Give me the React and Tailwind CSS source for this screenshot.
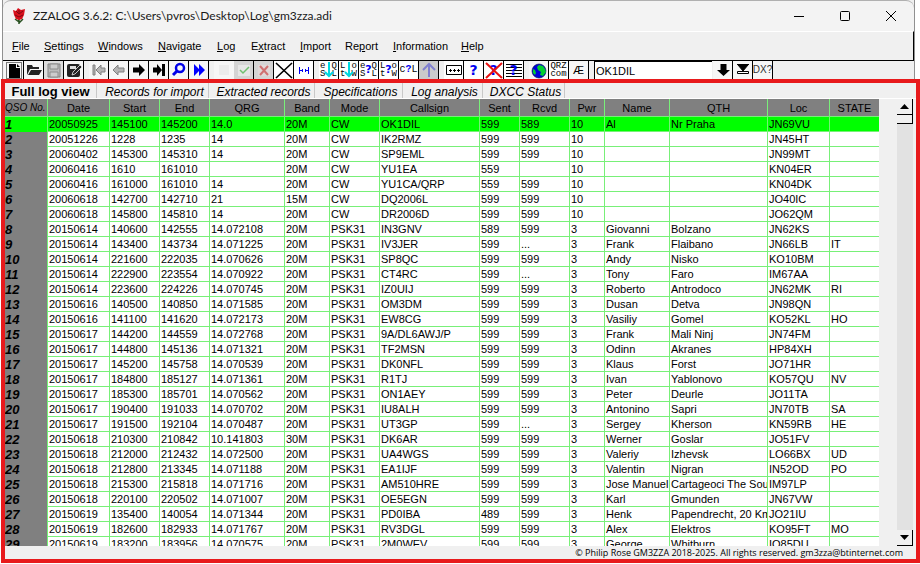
import React from "react";

const COLUMNS = [
  ["QSO No.", 42],
  ["Date", 62],
  ["Start", 50],
  ["End", 50],
  ["QRG", 75],
  ["Band", 45],
  ["Mode", 50],
  ["Callsign", 100],
  ["Sent", 40],
  ["Rcvd", 50],
  ["Pwr", 35],
  ["Name", 65],
  ["QTH", 98],
  ["Loc", 62],
  ["STATE", 50],
];

const LOG = `20050925|145100|145200|14.0|20M|CW|OK1DIL|599|589|10|Al|Nr Praha|JN69VU|
20051226|1228|1235|14|20M|CW|IK2RMZ|599|599|10|||JN45HT|
20060402|145300|145310|14|20M|CW|SP9EML|599|599|10|||JN99MT|
20060416|1610|161010||20M|CW|YU1EA|559||10|||KN04ER|
20060416|161000|161010|14|20M|CW|YU1CA/QRP|559|599|10|||KN04DK|
20060618|142700|142710|21|15M|CW|DQ2006L|599|599|10|||JO40IC|
20060618|145800|145810|14|20M|CW|DR2006D|599|599|10|||JO62QM|
20150614|140600|142555|14.072108|20M|PSK31|IN3GNV|589|599|3|Giovanni|Bolzano|JN62KS|
20150614|143400|143734|14.071225|20M|PSK31|IV3JER|599|...|3|Frank|Flaibano|JN66LB|IT
20150614|221600|222035|14.070626|20M|PSK31|SP8QC|599|599|3|Andy|Nisko|KO10BM|
20150614|222900|223554|14.070922|20M|PSK31|CT4RC|599|...|3|Tony|Faro|IM67AA|
20150614|223600|224226|14.070745|20M|PSK31|IZ0UIJ|599|599|3|Roberto|Antrodoco|JN62MK|RI
20150616|140500|140850|14.071585|20M|PSK31|OM3DM|599|599|3|Dusan|Detva|JN98QN|
20150616|141100|141620|14.072173|20M|PSK31|EW8CG|599|599|3|Vasiliy|Gomel|KO52KL|HO
20150617|144200|144559|14.072768|20M|PSK31|9A/DL6AWJ/P|599|599|3|Frank|Mali Ninj|JN74FM|
20150617|144800|145136|14.071321|20M|PSK31|TF2MSN|599|599|3|Odinn|Akranes|HP84XH|
20150617|145200|145758|14.070539|20M|PSK31|DK0NFL|599|599|3|Klaus|Forst|JO71HR|
20150617|184800|185127|14.071361|20M|PSK31|R1TJ|599|599|3|Ivan|Yablonovo|KO57QU|NV
20150617|185300|185701|14.070562|20M|PSK31|ON1AEY|599|599|3|Peter|Deurle|JO11TA|
20150617|190400|191033|14.070702|20M|PSK31|IU8ALH|599|599|3|Antonino|Sapri|JN70TB|SA
20150617|191500|192104|14.070487|20M|PSK31|UT3GP|599|...|3|Sergey|Kherson|KN59RB|HE
20150618|210300|210842|10.141803|30M|PSK31|DK6AR|599|599|3|Werner|Goslar|JO51FV|
20150618|212000|212432|14.072500|20M|PSK31|UA4WGS|599|599|3|Valeriy|Izhevsk|LO66BX|UD
20150618|212800|213345|14.071188|20M|PSK31|EA1IJF|599|599|3|Valentin|Nigran|IN52OD|PO
20150618|215300|215818|14.071716|20M|PSK31|AM510HRE|599|599|3|Jose Manuel|Cartageoci The South|IM97LP|
20150618|220100|220502|14.071007|20M|PSK31|OE5EGN|599|599|3|Karl|Gmunden|JN67VW|
20150619|135400|140054|14.071344|20M|PSK31|PD0IBA|489|599|3|Henk|Papendrecht, 20 Km|JO21IU|
20150619|182600|182933|14.071767|20M|PSK31|RV3DGL|599|599|3|Alex|Elektros|KO95FT|MO
20150619|183200|183956|14.070575|20M|PSK31|2M0WEV|599|599|3|George|Whitburn|IO85DU|`
  .split("\n")
  .map((line) => line.split("|"));

const MENUS = [
  ["", "F", "ile", "w-8"],
  ["", "S", "ettings", "w-[54px]"],
  ["", "W", "indows", "w-[60px]"],
  ["", "N", "avigate", "w-[59px]"],
  ["", "L", "og", "w-[34px]"],
  ["E", "x", "tract", "w-[49px]"],
  ["", "I", "mport", "w-[45px]"],
  ["Re", "p", "ort", "w-12"],
  ["", "I", "nformation", "w-[68px]"],
  ["", "H", "elp", "w-8"],
];

const TABS = [
  ["Records for import", "w-[112px]"],
  ["Extracted records", "w-[106px]"],
  ["Specifications", "w-[88px]"],
  ["Log analysis", "w-20"],
  ["DXCC Status", "w-[82px]"],
];

function Tool({ label, tone = "bg-[#f6f6f6]", children }) {
  return (
    <button
      type="button"
      aria-label={label}
      className={`relative flex h-[18px] w-5 shrink-0 items-center justify-center overflow-hidden border-r border-black ${tone}`}
    >
      {children}
    </button>
  );
}

function Icon({ children }) {
  return (
    <svg viewBox="0 0 18 18" className="size-[18px] shrink-0" aria-hidden="true">
      {children}
    </svg>
  );
}

function Lettered({ letters }) {
  return (
    <span className="grid grid-cols-2 gap-x-1.5 text-center font-['Liberation_Mono',monospace] text-[9px] leading-[8px] text-black">
      {letters.split("").map((letter) => (
        <span key={letter}>{letter}</span>
      ))}
    </span>
  );
}

function Query({ size = "text-sm" }) {
  return (
    <span className={`font-['DejaVu_Sans',sans-serif] leading-4 font-bold text-[#0000f0] ${size}`}>?</span>
  );
}

function Over({ children }) {
  return <span className="absolute inset-0 flex items-center justify-center">{children}</span>;
}

const CyanArrow = () => (
  <Icon>
    <path d="M9 1v14M5 11l4 4 4-4" fill="none" stroke="#00d8e0" strokeWidth="2" />
  </Icon>
);

function Toolbar() {
  return (
    <div className="flex h-[18px] gap-[5px] overflow-hidden pl-px">
      <div className="flex">
        <Tool label="New">
          <Icon>
            <rect x="1.5" y="1.5" width="15" height="16" fill="none" stroke="#000" strokeDasharray="1 1" />
            <path d="M4 3h7v4h4v10H4zM12 3l3 3h-3z" fill="#000" />
          </Icon>
        </Tool>
        <Tool label="Open">
          <Icon>
            <path d="M2 14V4h5l1 2h6v2H5zM3 14l3-5h11l-3 5z" fill="#222" />
          </Icon>
        </Tool>
        <Tool label="Save" tone="bg-[#dcdcdc]">
          <Icon>
            <path d="M3 3h12v13H3z" fill="#bbb" stroke="#808080" />
            <path d="M5 3h8v5H5zM5 11h8v5H5z" fill="#ccc" stroke="#8c8c8c" />
          </Icon>
        </Tool>
        <Tool label="Edit">
          <Icon>
            <rect x="2" y="3" width="13" height="13" rx="2" fill="#222" />
            <path d="M5 5h6v3H5z" fill="#ddd" />
            <path d="M7 14l1-3 7-7 2 2-7 7z" fill="#222" stroke="#eee" strokeWidth=".8" />
          </Icon>
        </Tool>
      </div>
      <div className="flex">
        <Tool label="First record">
          <Icon>
            <path d="M3 4h2v10H3zM6 9l5-5v3h4v4h-4v3z" fill="#b4b4b4" stroke="#808080" />
          </Icon>
        </Tool>
        <Tool label="Previous record">
          <Icon>
            <path d="M3 9l5-5v3h6v4H8v3z" fill="#b4b4b4" stroke="#808080" />
          </Icon>
        </Tool>
        <Tool label="Next record">
          <Icon>
            <path d="M15 9l-6-6v3.500H3v5h6V15z" fill="#000" />
          </Icon>
        </Tool>
        <Tool label="Last record">
          <Icon>
            <path d="M12 9L7 3v3.500H3v5h4V15zM12 3h3v12h-3z" fill="#000" />
          </Icon>
        </Tool>
        <Tool label="Find">
          <Icon>
            <circle cx="10" cy="7" r="4" fill="none" stroke="#0000e8" strokeWidth="2.500" />
            <path d="M7 10l-4 4" stroke="#0000e8" strokeWidth="3" />
          </Icon>
        </Tool>
        <Tool label="Find next">
          <Icon>
            <path d="M4 3l5 5V3l6 6-6 6v-5l-5 5z" fill="#0000ff" />
          </Icon>
        </Tool>
      </div>
      <div className="flex">
        <button type="button" aria-label="Mark" className="flex h-[18px] w-5 items-center justify-center bg-[#f6f6f6]">
          <span className="size-2.5 bg-[#ececec]" />
        </button>
        <Tool label="Accept" tone="bg-[#d4d4d4]">
          <Icon>
            <path d="M3 4h12v11H3z" fill="#e6e6e6" />
            <path d="M5 9l3 3 6-6" fill="none" stroke="#70c070" strokeWidth="1.500" />
          </Icon>
        </Tool>
        <Tool label="Reject" tone="bg-[#d4d4d4]">
          <Icon>
            <path d="M3 4h12v11H3z" fill="#e0d8d8" />
            <path d="M5 5l8 9M13 5l-8 9" stroke="#d07070" strokeWidth="2" />
          </Icon>
        </Tool>
        <Tool label="Cancel" tone="bg-white">
          <Icon>
            <path d="M1 2l16 15M17 2L1 17" stroke="#000" strokeWidth="1.600" />
          </Icon>
        </Tool>
        <Tool label="Signal" tone="bg-white">
          <Icon>
            <path d="M4.500 6v7M7.500 8v3M10.500 8v3M13.500 6v7M5 9.500h2M11 9.500h2" stroke="#0000f0" />
          </Icon>
        </Tool>
      </div>
      <div className="flex">
        <Tool label="Download eQSL" tone="bg-white">
          <Lettered letters="eQSL" />
          <Over><CyanArrow /></Over>
        </Tool>
        <Tool label="Download LotW" tone="bg-white">
          <Lettered letters="LotW" />
          <Over><CyanArrow /></Over>
        </Tool>
        <Tool label="Query eQSL" tone="bg-white">
          <Lettered letters="eQSL" />
          <Over><Query size="text-[11px]" /></Over>
        </Tool>
        <Tool label="Query LotW" tone="bg-white">
          <Lettered letters="LotW" />
          <Over><Query size="text-[11px]" /></Over>
        </Tool>
        <Tool label="Query Club Log" tone="bg-white">
          <span className="font-['Liberation_Mono',monospace] text-[10px] leading-4">
            c<b className="text-[#0000f0]">?</b>L
          </span>
        </Tool>
        <Tool label="Upload" tone="bg-[#cbcbcb]">
          <Icon>
            <path d="M9 16V4M3 9l6-6 6 6" fill="none" stroke="#8080d0" strokeWidth="2" />
          </Icon>
        </Tool>
      </div>
      <div className="flex">
        <Tool label="Rename" tone="bg-white">
          <Icon>
            <path d="M1.500 4.500h15v9h-15z" fill="#fff" stroke="#000" />
            <path d="M4 9.500h3M8 9.500h3M12 9.500h3M5.500 8v3M9.500 8v3M13.500 8v3" stroke="#000" />
          </Icon>
        </Tool>
        <Tool label="Query" tone="bg-white"><Query /></Tool>
        <Tool label="Clear query" tone="bg-white">
          <Query />
          <Over>
            <Icon>
              <path d="M1 2l16 15M17 2L1 17" stroke="#e81010" strokeWidth="2" />
            </Icon>
          </Over>
        </Tool>
        <Tool label="Query list" tone="bg-white">
          <Over>
            <Icon>
              <path d="M1 3.500h16M1 6.500h16M1 9.500h16M1 12.500h16M1 15.500h16" stroke="#000" />
            </Icon>
          </Over>
          <Over><Query /></Over>
        </Tool>
      </div>
      <div className="flex">
        <Tool label="World">
          <Icon>
            <circle cx="9" cy="10" r="7" fill="#0000d8" stroke="#001040" strokeWidth=".6" />
            <path d="M9 4l4 1 2 3 1 3-3 4-3-1 1-3-3-2-1-3zM3 8l2 1 1 3-1 2-2-2z" fill="#00d030" />
          </Icon>
        </Tool>
        <Tool label="QRZ.com" tone="bg-white">
          <span className="flex flex-col text-center font-['Liberation_Mono',monospace] text-[9px] leading-[8px]">
            <span>QRZ</span>
            <span>com</span>
          </span>
        </Tool>
        <Tool label="Special characters">
          <span className="text-[11px] leading-4">Æ</span>
        </Tool>
      </div>
      <div className="flex">
        <input
          aria-label="Search"
          defaultValue="OK1DIL"
          className="h-[18px] w-[118px] border-t border-l border-black bg-white pl-px text-[11px] leading-4 outline-none"
        />
        <span className="w-px" />
        <Tool label="Search down">
          <Icon>
            <path d="M6.500 3h6v6H16l-6.500 6L3 9h3.500z" fill="#000" />
          </Icon>
        </Tool>
        <Tool label="Search to end">
          <Icon>
            <path d="M3 3.500h12M4 4h10L9 10z" fill="#000" stroke="#000" />
            <path d="M3.500 10.500h11v2h-11z" fill="#fff" stroke="#000" />
          </Icon>
        </Tool>
        <Tool label="DX query">
          <span className="text-[10px] leading-4 text-[#333]">DX?</span>
        </Tool>
      </div>
    </div>
  );
}

function TitleBar() {
  return (
    <header className="flex h-[31px] items-center rounded-t-lg border-t border-[#b0b0b0] bg-[#f3f3f3]">
      <svg viewBox="0 0 16 18" className="ml-2 h-[18px] w-4" aria-hidden="true">
        <path d="M8 10v7M8 15l-4-3M8 16l4-4" stroke="#285020" strokeWidth="1.500" fill="none" />
        <path d="M2 3l3 1 2-3 3 2 4-1-1 6-2 4-3 1-3-1-2-4z" fill="#d8101c" />
        <path d="M5 4l3 3 4-3M4 8l4 2 4-2M8 3v4" stroke="#800810" fill="none" />
      </svg>
      <h1 className="ml-1.5 flex-1 font-['Lato','Noto_Sans',sans-serif] text-xs text-[#1a1a1a]">
        ZZALOG 3.6.2: C:\Users\pvros\Desktop\Log\gm3zza.adi
      </h1>
      <button type="button" aria-label="Minimize" className="flex w-[46px] justify-center">
        <svg viewBox="0 0 10 10" className="size-2.5"><path d="M0 5.500h10" stroke="#000" /></svg>
      </button>
      <button type="button" aria-label="Maximize" className="flex w-[46px] justify-center">
        <svg viewBox="0 0 10 10" className="size-2.5"><rect x=".5" y=".5" width="9" height="9" rx="1" fill="none" stroke="#000" /></svg>
      </button>
      <button type="button" aria-label="Close" className="flex w-[46px] justify-center">
        <svg viewBox="0 0 10 10" className="size-2.5"><path d="M0 0l10 10M10 0L0 10" stroke="#000" /></svg>
      </button>
    </header>
  );
}

function LogTable() {
  return (
    <table className="w-[874px] shrink-0 table-fixed border-separate border-spacing-0 text-[11px] leading-[14px] whitespace-nowrap">
      <colgroup>
        {COLUMNS.map(([name, width]) => (
          <col key={name} style={{ width }} />
        ))}
      </colgroup>
      <thead>
        <tr className="h-[18px] bg-[#808080]">
          {COLUMNS.map(([name], i) => (
            <th
              key={name}
              scope="col"
              className={`border-b border-[#78f078] p-0 font-normal ${i ? "border-l text-center" : "text-left text-[10px] italic"}`}
            >
              {name}
            </th>
          ))}
        </tr>
      </thead>
      <tbody>
        {LOG.map((cells, r) => (
          <tr key={r} className={`h-[15px] ${r === 0 ? "bg-[#00ff00]" : "bg-white"}`}>
            <th
              scope="row"
              className={`p-0 text-left text-[13px] leading-[14px] font-bold italic ${r === 0 ? "" : "bg-[#808080]"}`}
            >
              {r + 1}
            </th>
            {cells.map((text, c) => (
              <td key={c} className="overflow-hidden border-b border-l border-[#78f078] p-0 pl-px">
                {text}
              </td>
            ))}
          </tr>
        ))}
      </tbody>
    </table>
  );
}

function ScrollBar() {
  return (
    <div className="mr-[3px] ml-auto flex w-4 flex-col bg-[#e2e2e2]">
      <button type="button" aria-label="Scroll up" className="flex h-4 items-center justify-center border-r border-b border-black bg-[#f0f0f0]">
        <svg viewBox="0 0 9 5" className="h-[5px] w-[9px]"><path d="M0 5l4.500-5L9 5z" /></svg>
      </button>
      <div className="h-[9px] border-r border-b border-black bg-[#f0f0f0]" />
      <button type="button" aria-label="Scroll down" className="mt-auto flex h-4 items-center justify-center border-r border-b border-black bg-[#f0f0f0]">
        <svg viewBox="0 0 9 5" className="h-[5px] w-[9px]"><path d="M0 0l4.500 5L9 0z" /></svg>
      </button>
    </div>
  );
}

export default function App() {
  return (
    <div className="flex h-screen flex-col overflow-hidden bg-white pb-px font-['Liberation_Sans',Arial,sans-serif] text-black">
      <div className="mr-[5px] ml-0.5 border-x border-[#909090] bg-[#f0f0f0]">
        <TitleBar />
        <nav className="flex h-[30px] items-center border-t border-r border-b border-t-white border-r-black border-b-black pl-[9px] text-[11px]">
          {MENUS.map(([before, key, after, width]) => (
            <button type="button" key={key + after} className={`text-left ${width}`}>
              {before}
              <u>{key}</u>
              {after}
            </button>
          ))}
        </nav>
        <Toolbar />
      </div>
      <main className="ml-px flex min-h-0 flex-1 flex-col border-4 border-[#e81a1c] bg-[#f0f0f0]">
        <div role="tablist" className="flex h-4 shrink-0 border-b border-white leading-[18px] whitespace-nowrap">
          <button
            type="button"
            role="tab"
            aria-selected="true"
            className="w-[92px] border-r border-[#c8c8c8] text-center text-[13px] font-bold"
          >
            Full log view
          </button>
          {TABS.map(([name, width]) => (
            <button
              type="button"
              role="tab"
              key={name}
              className={`border-r border-[#c8c8c8] pl-1 text-center text-xs leading-[18px] italic ${width}`}
            >
              {name}
            </button>
          ))}
        </div>
        <div className="flex min-h-0 flex-1 overflow-hidden">
          <LogTable />
          <ScrollBar />
        </div>
        <footer className="flex h-[13px] shrink-0 items-center justify-end pr-[13px] font-['Open_Sans','Noto_Sans',sans-serif] text-[9px] leading-3">
          © Philip Rose GM3ZZA 2018-2025. All rights reserved. gm3zza@btinternet.com
        </footer>
      </main>
    </div>
  );
}
